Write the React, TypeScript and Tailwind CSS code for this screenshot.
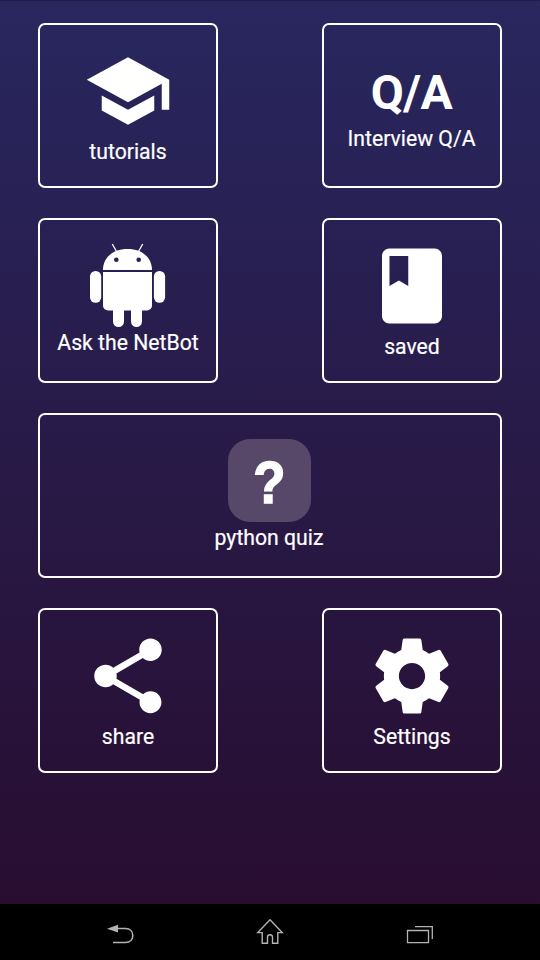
import React from "react";

interface TileProps {
  label: string;
  className?: string;
  children: React.ReactNode;
}

const Tile: React.FC<TileProps> = ({ label, className = "w-[180px] pt-[21px]", children }) => (
  <button
    className={`flex h-[165px] flex-col items-center rounded-[7px] border-2 border-white ${className}`}
  >
    {children}
    <span className="pt-px text-[21.2px] leading-[30px] whitespace-nowrap [-webkit-text-stroke:0.2px_white]">
      {label}
    </span>
  </button>
);

const MaterialIcon: React.FC<{ d: string }> = ({ d }) => (
  <svg viewBox="0 0 24 24" className="h-[90px] w-[90px] shrink-0 fill-white" aria-hidden="true">
    <path d={d} />
  </svg>
);

const SCHOOL =
  "M5 13.18v4L12 21l7-3.82v-4L12 17l-7-3.82zM12 3L1 9l11 6 9-4.91V17h2V9L12 3z";
const BOOK =
  "M18 2H6c-1.1 0-2 .9-2 2v16c0 1.1.9 2 2 2h12c1.1 0 2-.9 2-2V4c0-1.1-.9-2-2-2zM6 4h5v8l-2.5-1.5L6 12V4z";
const SHARE =
  "M18 16.08c-.76 0-1.44.3-1.96.77L8.91 12.7c.05-.23.09-.46.09-.7s-.04-.47-.09-.7l7.05-4.11c.54.5 1.25.81 2.04.81 1.66 0 3-1.34 3-3s-1.34-3-3-3-3 1.34-3 3c0 .24.04.47.09.7L8.04 9.81C7.5 9.31 6.79 9 6 9c-1.66 0-3 1.34-3 3s1.34 3 3 3c.79 0 1.5-.31 2.04-.81l7.12 4.16c-.05.21-.08.43-.08.65 0 1.61 1.31 2.92 2.92 2.92 1.61 0 2.92-1.31 2.92-2.92s-1.31-2.92-2.92-2.92z";
const SETTINGS =
  "M19.43 12.98c.04-.32.07-.64.07-.98s-.03-.66-.07-.98l2.11-1.65c.19-.15.24-.42.12-.64l-2-3.46c-.12-.22-.39-.3-.61-.22l-2.49 1c-.52-.4-1.08-.73-1.69-.98l-.38-2.65C14.46 2.18 14.25 2 14 2h-4c-.25 0-.46.18-.49.42l-.38 2.65c-.61.25-1.17.59-1.69.98l-2.49-1c-.23-.09-.49 0-.61.22l-2 3.46c-.13.22-.07.49.12.64l2.11 1.65c-.04.32-.07.65-.07.98s.03.66.07.98l-2.11 1.65c-.19.15-.24.42-.12.64l2 3.46c.12.22.39.3.61.22l2.49-1c.52.4 1.08.73 1.69.98l.38 2.65c.03.24.24.42.49.42h4c.25 0 .46-.18.49-.42l.38-2.65c.61-.25 1.17-.59 1.69-.98l2.49 1c.23.09.49 0 .61-.22l2-3.46c.12-.22.07-.49-.12-.64l-2.11-1.65zM12 15.5c-1.93 0-3.5-1.57-3.5-3.5s1.57-3.5 3.5-3.5 3.5 1.57 3.5 3.5-1.57 3.5-3.5 3.5z";

const RobotIcon = () => (
  <svg viewBox="0 0 76 84" className="h-[84px] w-[76px] shrink-0 fill-white" aria-hidden="true">
    <path d="M22.3 1l4.2 7.5M52.7 1l-4.2 7.5" stroke="white" strokeWidth="1.3" />
    <path
      fillRule="evenodd"
      d="M13 27C13 14.5 23 6 37.5 6S62 14.5 62 27zM26.3 14.4a2.3 2.3 0 100 4.6 2.3 2.3 0 000-4.6zM48.7 14.4a2.3 2.3 0 100 4.6 2.3 2.3 0 000-4.6z"
    />
    <path d="M13 29h49v33.5a5 5 0 01-5 5H18a5 5 0 01-5-5z" />
    <rect x="0" y="28" width="11.2" height="31.8" rx="5.5" />
    <rect x="63.9" y="28" width="11.2" height="31.8" rx="5.5" />
    <path d="M23 66h11v12.5a5.5 5.5 0 01-11 0zM41 66h11v12.5a5.5 5.5 0 01-11 0z" />
  </svg>
);

const NavBar = () => (
  <nav className="flex h-14 items-center justify-between bg-black px-[105px]">
    <button aria-label="Back">
      <svg width="30" height="30" viewBox="0 0 30 30" fill="none">
        <path d="M2 11.8L13 7.8v7.8z" fill="#b3b3b3" />
        <path
          d="M12 11.5h8.5c4.5 0 7.3 3 7.3 7s-2.8 7-7.3 7H8"
          stroke="#b3b3b3"
          strokeWidth="1.6"
        />
      </svg>
    </button>
    <button aria-label="Home">
      <svg width="30" height="30" viewBox="0 0 30 30" fill="none">
        <path
          d="M15 2.8L2.8 15.6h4.4v10.7h5.3v-6a2.5 2.5 0 015 0v6h5.3V15.6h4.4z"
          stroke="#b3b3b3"
          strokeWidth="1.4"
        />
      </svg>
    </button>
    <button aria-label="Recent apps">
      <svg width="30" height="30" viewBox="0 0 30 30" fill="none" stroke="#b3b3b3" strokeWidth="1.3">
        <path d="M2.5 13.5h21v12.2h-21z" />
        <path d="M10 9.6h17.3V22" />
      </svg>
    </button>
  </nav>
);

export default function App() {
  return (
    <div className="flex h-[960px] w-[540px] flex-col bg-black font-['Roboto',sans-serif] text-white">
      <main className="flex flex-1 flex-col gap-[30px] border-t border-[#1f1d45] bg-linear-to-b/srgb from-[#28275f] to-[#280d30] px-[38px] pt-[22px]">
        <div className="flex justify-between">
          <Tile label="tutorials">
            <MaterialIcon d={SCHOOL} />
          </Tile>
          <Tile label="Interview Q/A" className="w-[180px] pt-[39px] pr-px">
            <span className="mb-px text-[48px] leading-[58px] font-bold tracking-[-0.5px]">Q/A</span>
          </Tile>
        </div>
        <div className="flex justify-between">
          <Tile label="Ask the NetBot" className="w-[180px] pt-[23px]">
            <RobotIcon />
          </Tile>
          <Tile label="saved">
            <MaterialIcon d={BOOK} />
          </Tile>
        </div>
        <Tile label="python quiz" className="w-full pt-[24px] pr-[2px]">
          <span className="flex h-[83px] w-[83px] shrink-0 items-center justify-center rounded-[22px] bg-[#57486a] pt-[4px] font-['Liberation_Sans',sans-serif] text-[60px] leading-none font-bold">
            <span className="scale-x-[0.88] [-webkit-text-stroke:1.6px_white]">?</span>
          </span>
        </Tile>
        <div className="flex justify-between">
          <Tile label="share">
            <MaterialIcon d={SHARE} />
          </Tile>
          <Tile label="Settings">
            <MaterialIcon d={SETTINGS} />
          </Tile>
        </div>
      </main>
      <NavBar />
    </div>
  );
}
